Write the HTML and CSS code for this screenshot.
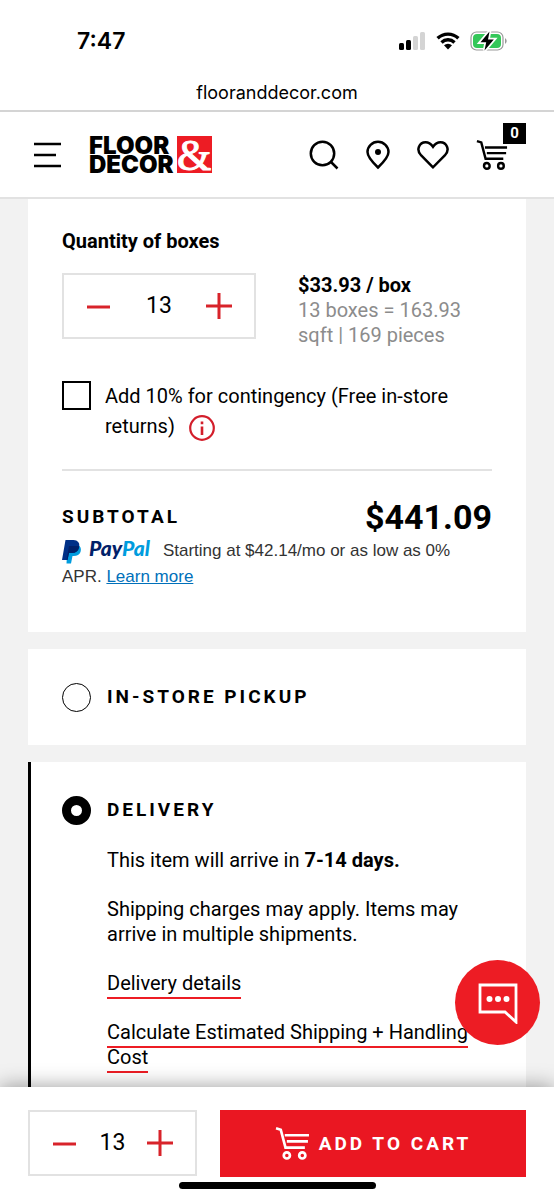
FILE: index.html
```html
<!DOCTYPE html>
<html lang="en">
<head>
<meta charset="utf-8">
<meta name="viewport" content="width=device-width, initial-scale=1">
<title>Floor &amp; Decor</title>
<link rel="stylesheet" href="styles.css">
</head>
<body>
<svg class="sprite" aria-hidden="true">
  <symbol id="cart" viewBox="0 0 34 34">
    <g fill="none" stroke="currentColor" stroke-width="2.6">
      <path d="M1 2.2 5.6 3.6 10.2 21H29"/>
      <path d="M9.5 9H33M11.5 15H32"/>
      <circle cx="11.5" cy="28.6" r="3"/><circle cx="26.5" cy="28.6" r="3"/>
    </g>
  </symbol>
</svg>
<div class="page">
  <div class="status">
    <span class="time">7:47</span>
    <span class="indicators">
      <svg width="28" height="20" viewBox="0 0 28 20"><rect x="1" y="12" width="5" height="7" rx="1.5"/><rect x="8" y="9" width="5" height="10" rx="1.5"/><g fill="#d4d4d4"><rect x="15" y="5" width="5" height="14" rx="1.5"/><rect x="22" y="1" width="5" height="18" rx="1.5"/></g></svg>
      <svg width="24" height="20" viewBox="0 0 24 20"><g fill="none" stroke="#000" stroke-width="3.4"><path d="M1.6 7.3A15 15 0 0 1 22.4 7.3"/><path d="M5.5 11.4A9.4 9.4 0 0 1 18.5 11.4"/></g><path d="M8 14.3A5.8 5.8 0 0 1 16 14.3L12 18.5Z"/></svg>
      <svg width="38" height="20" viewBox="0 0 38 20"><rect x="1" y="1" width="32" height="18" rx="5.5" fill="#fff" stroke="#999" stroke-width="1.2"/><rect x="3" y="3" width="28" height="14" rx="4" fill="#34c759"/><path d="M35 7Q38.5 10 35 13Z" fill="#999"/><path d="M19.5.5 10.5 11.2H16.2L14.5 19.5 23.8 8.6H18Z" stroke="#fff" stroke-width="3.5"/><path d="M19.5.5 10.5 11.2H16.2L14.5 19.5 23.8 8.6H18Z"/></svg>
    </span>
  </div>
  <div class="address">flooranddecor.com</div>

  <header class="header">
    <button class="icon-button" aria-label="Menu"><svg width="28" height="26" viewBox="0 0 28 26"><path d="M0 2H27M0 13H22M0 24H27" stroke="#000" stroke-width="2.4"/></svg></button>
    <a class="logo" href="#" aria-label="Floor and Decor home">
      <span class="logo-words"><span>FLOOR</span><span>DECOR</span></span>
      <svg class="logo-mark" width="35" height="37" viewBox="0 0 35 37"><rect width="35" height="37" fill="#ed1c24"/><text class="ampersand" x="0" y="34">&amp;</text></svg>
    </a>
    <nav class="tools">
      <button class="icon-button" aria-label="Search"><svg width="30" height="30" viewBox="0 0 30 30"><g fill="none" stroke="#000" stroke-width="2.5"><circle cx="13.5" cy="13.5" r="11.7"/><path d="M22 22 28.5 28.5"/></g></svg></button>
      <button class="icon-button" aria-label="Stores"><svg width="24" height="30" viewBox="0 0 24 30"><path d="M12 27.500Q1.500 17.500 1.500 12A10.500 10.200 0 0 1 22.500 12Q22.500 17.500 12 27.500Z" fill="none" stroke="#000" stroke-width="2.5"/><circle cx="12" cy="12" r="3"/></svg></button>
      <button class="icon-button" aria-label="Wish list"><svg width="32" height="30" viewBox="0 0 32 30"><path d="M16 27.300 4.200 15.500C-1.500 9.500 2.500 2.300 8.600 2.300 12 2.300 14 4 16 6.800 18 4 20 2.300 23.400 2.300 29.500 2.300 33.500 9.500 27.800 15.500Z" fill="none" stroke="#000" stroke-width="2.5"/></svg></button>
      <button class="icon-button" aria-label="Cart, 0 items"><svg width="32" height="32"><use href="#cart"/></svg><span class="badge">0</span></button>
    </nav>
  </header>

  <main class="content">
    <section class="card">
      <h2 class="title">Quantity of boxes</h2>
      <div class="quantity">
        <div class="stepper">
          <button aria-label="Fewer boxes"><svg width="26" height="26" viewBox="0 0 26 26"><path d="M1 14H24"/></svg></button>
          <input type="text" inputmode="numeric" value="13" aria-label="Quantity of boxes">
          <button aria-label="More boxes"><svg width="26" height="26" viewBox="0 0 26 26"><path d="M0 13H26M13 0V26"/></svg></button>
        </div>
        <p class="price"><strong>$33.93 / box</strong><br>13 boxes = 163.93 sqft | 169 pieces</p>
      </div>
      <div class="contingency">
        <input type="checkbox" id="extra">
        <div><label for="extra">Add 10% for contingency (Free in-store returns)</label><button class="info" aria-label="About contingency"><svg width="26" height="26" viewBox="0 0 26 26"><circle cx="13" cy="13" r="11.800" fill="none" stroke="#d31e2b" stroke-width="2.200"/><path d="M13 11.500V20M13 6.500V9.200" stroke="#d31e2b" stroke-width="2.600"/></svg></button></div>
      </div>
      <div class="subtotal"><h2 class="heading">Subtotal</h2><strong class="total">$441.09</strong></div>
      <p class="paypal"><svg class="paypal-mark" width="20" height="24" viewBox="0 0 20 24"><path d="M5.500 5H16Q20 7 18.500 12 17 16 11.500 16H10.500L9 23.500H4.500Z" fill="#009cde"/><path d="M3.500 0H11.500Q18 .5 17.300 6.500 16.200 13 10 13H7L5.500 20H0Z" fill="#003087"/><path d="M7 6H15Q17 6 17.200 7 16 13 10 13H7L5.500 20H4.600Z" fill="#012169"/></svg><b class="paypal-word">Pay<span>Pal</span></b>Starting at $42.14/mo or as low as 0% APR. <a href="#">Learn more</a></p>
    </section>

    <section class="card">
      <label class="choice"><input type="radio" name="method"><span class="heading">In-store pickup</span></label>
    </section>

    <section class="card selected">
      <label class="choice"><input type="radio" name="method" checked><span class="heading">Delivery</span></label>
      <div class="details">
        <p>This item will arrive in <strong>7-14 days.</strong></p>
        <p>Shipping charges may apply. Items may arrive in multiple shipments.</p>
        <p><a href="#">Delivery details</a></p>
        <p><a href="#">Calculate Estimated Shipping + Handling Cost</a></p>
      </div>
    </section>
  </main>

  <footer class="buy-bar">
    <button class="chat" aria-label="Chat"><svg width="42" height="42" viewBox="0 0 42 42"><path d="M3 3H39V40L28 30H3Z" fill="none" stroke="#fff" stroke-width="2.800"/><g fill="#fff"><circle cx="12.500" cy="17" r="3"/><circle cx="21" cy="17" r="3"/><circle cx="29.500" cy="17" r="3"/></g></svg></button>
    <div class="buy-row">
      <div class="stepper">
        <button aria-label="Fewer"><svg width="26" height="26" viewBox="0 0 26 26"><path d="M1 14H24"/></svg></button>
        <input type="text" inputmode="numeric" value="13" aria-label="Quantity">
        <button aria-label="More"><svg width="26" height="26" viewBox="0 0 26 26"><path d="M0 13H26M13 0V26"/></svg></button>
      </div>
      <button class="add"><svg width="35" height="35"><use href="#cart"/></svg><span>Add to cart</span></button>
    </div>
    <div class="home-indicator"></div>
  </footer>
</div>
</body>
</html>
```
FILE: styles.css
```css
* { box-sizing: border-box; }
body { margin: 0; background: #f2f2f2; color: #000; font: 20px/25px Roboto, sans-serif; }
h2, p { margin: 0; }
button { padding: 0; border: 0; background: none; color: inherit; font: inherit; cursor: pointer; }
svg { display: block; flex: none; }
.sprite { position: absolute; width: 0; height: 0; }
.page { display: flex; flex-direction: column; min-height: 100vh; }

.status { display: flex; justify-content: space-between; align-items: center; height: 82px; padding: 0 46px 0 77px; background: #fff; }
.time { font: 600 23px/28px Inter, sans-serif; }
.indicators { display: flex; gap: 10px; }
.address { height: 30px; padding-bottom: 7px; border-bottom: 2px solid #d4d4d4; background: #fff; text-align: center; font: 18px/21px Inter, sans-serif; }

.header { display: flex; align-items: center; height: 87px; padding: 0 46px 0 34px; border-bottom: 2px solid #e2e2e2; background: #fff; }
.icon-button { position: relative; display: flex; }
.logo { display: flex; gap: 3px; margin-left: 27px; color: #000; text-decoration: none; }
.logo-words { display: flex; flex-direction: column; font: 900 24px/19px Inter, sans-serif; }
.logo-mark { overflow: visible; }
.ampersand { fill: #fff; stroke: #fff; font: 44px "Liberation Serif", serif; }
.tools { display: flex; align-items: center; gap: 27px; margin-left: auto; }
.badge { position: absolute; left: 27px; top: -16px; width: 23px; background: #000; color: #fff; font-size: 15px; font-weight: 700; line-height: 21px; }

.content { flex: 1; display: flex; flex-direction: column; gap: 17px; padding: 0 28px; }
.card { padding: 30px 34px; background: #fff; }
.title { font-size: 20px; line-height: 25px; }
.quantity { display: flex; gap: 42px; margin-top: 19px; }
.stepper { display: flex; align-items: center; justify-content: space-between; width: 194px; height: 66px; padding: 0 22px; border: 2px solid #e2e2e2; background: #fff; }
.stepper button { display: flex; stroke: #d8232a; stroke-width: 3; }
.stepper input { width: 40px; padding: 0; border: 0; background: none; color: #000; font: 23px/28px Roboto, sans-serif; text-align: center; }
.price { flex: 1; min-width: 0; padding-right: 20px; color: #8c8c8c; }
.price strong { color: #000; }
.contingency { display: flex; gap: 14px; margin-top: 33px; padding-bottom: 28px; border-bottom: 2px solid #e2e2e2; line-height: 30px; }
.contingency input { appearance: none; flex: none; width: 29px; height: 29px; margin: 0; border: 2px solid #000; }
.info { display: inline-flex; margin-left: 14px; vertical-align: middle; }
.subtotal { display: flex; justify-content: space-between; align-items: center; margin-top: 28px; }
.heading { font-size: 19px; font-weight: 700; line-height: 36px; letter-spacing: 3px; text-transform: uppercase; }
.total { font-size: 34px; line-height: 36px; }
.paypal { min-height: 67px; padding-top: 1px; padding-right: 34px; color: #333; font: 17px/26px "Liberation Sans", Arial, sans-serif; }
.paypal a { color: #0070ba; }
.paypal-mark { display: inline-block; margin-right: 7px; vertical-align: middle; }
.paypal-word { margin-right: 13px; color: #012169; font: italic 900 21px/24px Lato, sans-serif; }
.paypal-word span { color: #009cde; }

.choice { display: flex; align-items: center; gap: 16px; }
.choice input { appearance: none; flex: none; width: 29px; height: 29px; margin: 0; border: 1px solid #000; border-radius: 50%; }
.choice input:checked { border-width: 9px; }
.selected { flex: 1; padding-left: 31px; padding-bottom: 14px; border-left: 3px solid #000; }
.details { display: flex; flex-direction: column; gap: 24px; margin-top: 20px; padding-left: 45px; }
.details a { padding-bottom: 2px; border-bottom: 2px solid #ed1c24; color: #000; text-decoration: none; }

.buy-bar { position: sticky; bottom: 0; background: #fff; box-shadow: 0 0 20px #0006; }
.chat { position: absolute; right: 14px; bottom: 155px; display: flex; align-items: center; justify-content: center; width: 85px; height: 85px; border-radius: 50%; background: #ed1c24; }
.buy-row { display: flex; gap: 23px; padding: 23px 28px 5px; }
.buy-row .stepper { width: 169px; }
.add { flex: 1; display: flex; align-items: center; justify-content: center; gap: 9px; height: 67px; background: #ea1722; color: #fff; font-size: 19px; font-weight: 700; letter-spacing: 3px; text-transform: uppercase; }
.home-indicator { width: 197px; height: 7px; margin: 0 auto 11px; border-radius: 4px; background: #000; }
```
